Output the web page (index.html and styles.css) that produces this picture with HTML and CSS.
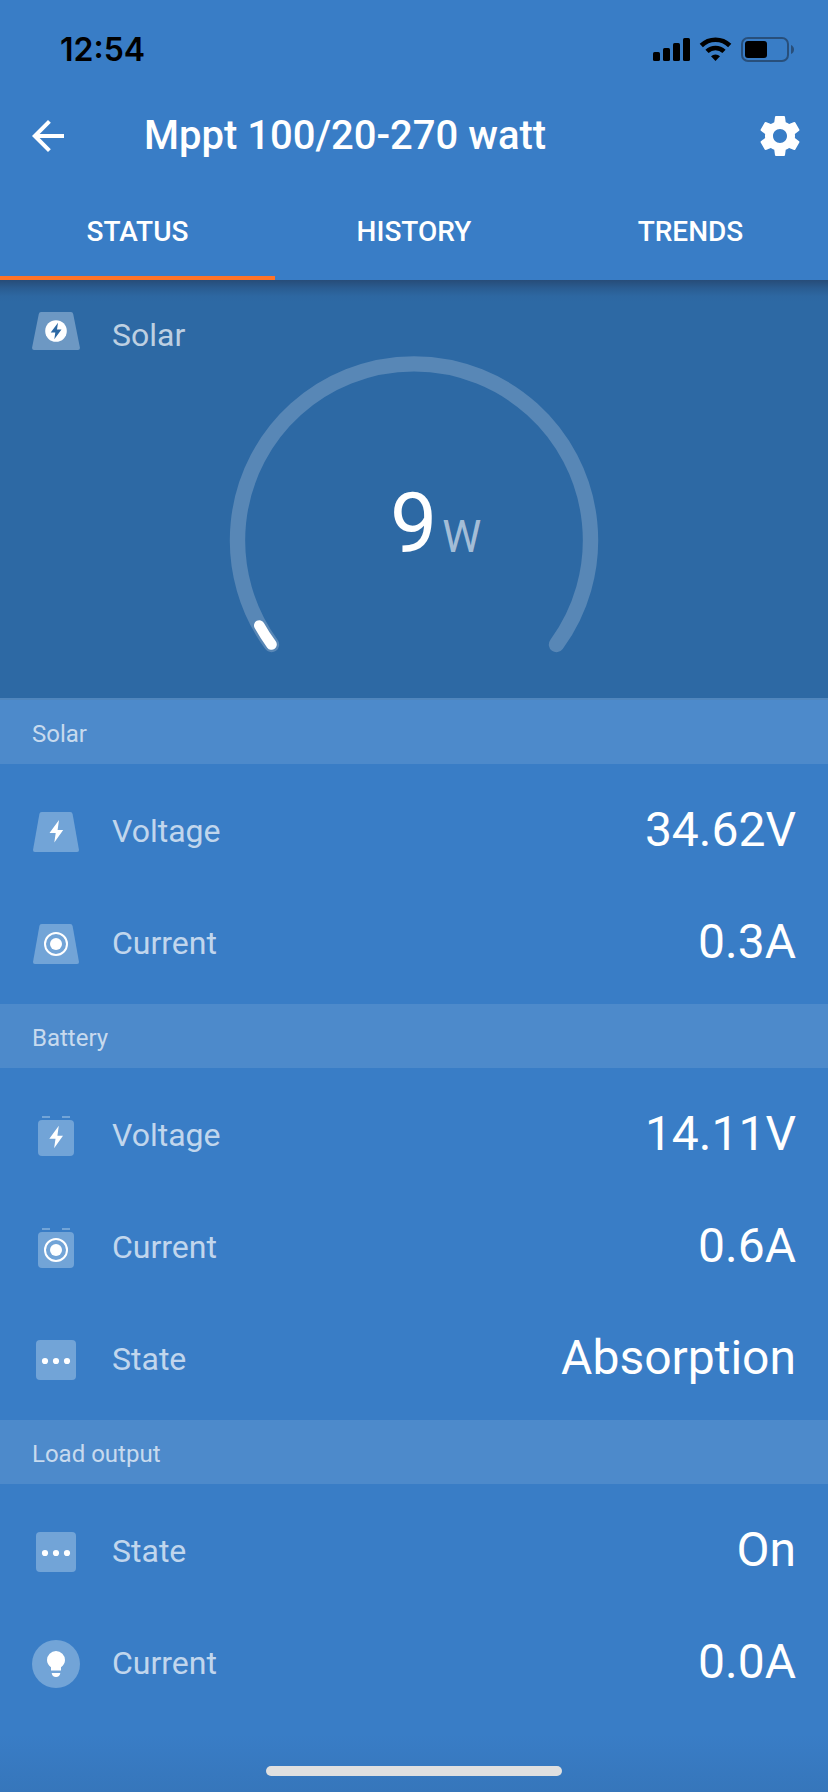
FILE: index.html
```html
<!DOCTYPE html>
<html lang="en">
<head>
<meta charset="utf-8">
<title>Mppt 100/20-270 watt</title>
<link rel="stylesheet" href="styles.css">
</head>
<body>
<svg class="defs" width="0" height="0" aria-hidden="true">
  <symbol id="panel" viewBox="0 0 48 48"><path d="M9.6 4H38.4Q40.2 4 40.6 6L46.9 41.5Q47.2 44 45 44H3Q.8 44 1.1 41.5L7.400 6Q7.800 4 9.600 4Z" fill="#72a4d7"/></symbol>
  <symbol id="battery" viewBox="0 0 48 48"><path d="M10 4h8v2h-8zM30 4h8v2h-8z" fill="#72a4d7"/><rect x="6" y="8" width="36" height="36" rx="4" fill="#72a4d7"/></symbol>
  <symbol id="bolt" viewBox="0 0 48 48"><path d="M27 12 17.500 25H23.700L22.300 34.500 31.200 22H25.600Z" fill="#fff"/></symbol>
  <symbol id="target" viewBox="0 0 48 48"><circle cx="24" cy="24" r="11" fill="none" stroke="#fff" stroke-width="2"/><circle cx="24" cy="24" r="6" fill="#fff"/></symbol>
  <symbol id="state" viewBox="0 0 48 48"><rect x="4" y="4" width="40" height="40" rx="4" fill="#72a4d7"/><g fill="#fff"><circle cx="13" cy="25" r="3.100"/><circle cx="24" cy="25" r="3.100"/><circle cx="35" cy="25" r="3.100"/></g></symbol>
</svg>

<header class="header">
  <div class="statusbar">
    <span class="time">12:54</span>
    <svg class="signals" width="144" height="28" viewBox="0 0 144 28">
      <rect x="2" y="16" width="7" height="9" rx="1.600"/><rect x="12" y="12" width="7" height="13" rx="1.600"/><rect x="22" y="7" width="7" height="18" rx="1.600"/><rect x="32" y="2" width="7" height="23" rx="1.600"/>
      <g fill="none" stroke="#000" stroke-width="4.600"><path d="M50.300 9.500A20.300 20.300 0 0 1 78.700 9.500"/><path d="M56 15.400A12.300 12.300 0 0 1 73 15.400"/></g>
      <path d="M60 20.300A6.800 6.800 0 0 1 69 20.300L64.500 25Z"/>
      <rect x="91" y="2" width="46" height="23" rx="6" fill="none" stroke="#284f7b" stroke-width="2"/>
      <rect x="94" y="5" width="22" height="17" rx="3"/>
      <path d="M140 9Q143 10.500 143 13.500T140 18Z" fill="#284f7b"/>
    </svg>
  </div>
  <div class="appbar">
    <svg class="back" viewBox="0 0 24 24"><path d="M20 11H7.830l5.590-5.590L12 4l-8 8 8 8 1.410-1.410L7.830 13H20v-2z"/></svg>
    <h1 class="title">Mppt 100/20-270 watt</h1>
    <svg class="gear" viewBox="0 0 24 24"><path d="M19.430 12.980c.04-.32.07-.64.07-.98s-.03-.66-.07-.98l2.110-1.650c.19-.15.24-.42.12-.64l-2-3.460c-.12-.22-.39-.3-.61-.22l-2.490 1c-.52-.4-1.080-.73-1.690-.98l-.38-2.650C14.460 2.180 14.250 2 14 2h-4c-.25 0-.46.18-.49.42l-.38 2.650c-.61.25-1.170.59-1.690.98l-2.490-1c-.23-.09-.49 0-.61.22l-2 3.460c-.13.22-.07.49.12.64l2.110 1.650c-.04.32-.07.65-.07.98s.03.66.07.98l-2.110 1.650c-.19.15-.24.42-.12.64l2 3.460c.12.22.39.3.61.22l2.490-1c.52.4 1.080.73 1.690.98l.38 2.650c.03.24.24.42.49.42h4c.25 0 .46-.18.49-.42l.38-2.650c.61-.25 1.170-.59 1.690-.98l2.490 1c.23.09.49 0 .61-.22l2-3.460c.12-.22.07-.49-.12-.64l-2.110-1.650zM12 15.500c-1.930 0-3.500-1.570-3.500-3.500s1.570-3.500 3.500-3.500 3.500 1.570 3.500 3.500-1.570 3.500-3.500 3.500z"/></svg>
  </div>
  <nav class="tabs">
    <span class="tab active">STATUS</span>
    <span class="tab">HISTORY</span>
    <span class="tab">TRENDS</span>
  </nav>
</header>

<main>
  <section class="overview">
    <div class="overview-head">
      <svg class="icon" viewBox="0 0 48 48"><path d="M9 4H39Q40.800 4 41.200 6L47.900 39.500Q48.200 42 46 42H2Q-.2 42 .1 39.500L6.800 6Q7.200 4 9 4Z" fill="#6d98c3"/><circle cx="24" cy="23" r="10.800" fill="#fff"/><path d="M26 14.700 18.700 24.500H23.300L22.300 31.200 29.500 21.500H25Z" fill="#2d69a4"/></svg>
      <span class="label">Solar</span>
    </div>
    <div class="gauge">
      <svg class="dial" viewBox="0 0 370 300">
        <path d="M42.500 288.500A176.500 176.500 0 1 1 327.500 288.500" fill="none" stroke="#5887b6" stroke-width="15.400" stroke-linecap="round"/>
        <path d="M42.500 288.500A176.500 176.500 0 0 1 30.300 269.500" fill="none" stroke="#fff" stroke-width="10.600" stroke-linecap="round"/>
      </svg>
      <div class="reading"><span class="power">9</span><span class="unit">W</span></div>
    </div>
  </section>

  <h2 class="section">Solar</h2>
  <div class="list">
    <div class="row"><svg class="icon" viewBox="0 0 48 48"><use href="#panel"/><use href="#bolt"/></svg><span class="label">Voltage</span><span class="value">34.62V</span></div>
    <div class="row"><svg class="icon" viewBox="0 0 48 48"><use href="#panel"/><use href="#target"/></svg><span class="label">Current</span><span class="value">0.3A</span></div>
  </div>

  <h2 class="section">Battery</h2>
  <div class="list">
    <div class="row"><svg class="icon" viewBox="0 0 48 48"><use href="#battery"/><use href="#bolt" x="-.2" y="1.700" width="48" height="48"/></svg><span class="label">Voltage</span><span class="value">14.11V</span></div>
    <div class="row"><svg class="icon" viewBox="0 0 48 48"><use href="#battery"/><use href="#target" y="2" width="48" height="48"/></svg><span class="label">Current</span><span class="value">0.6A</span></div>
    <div class="row"><svg class="icon" viewBox="0 0 48 48"><use href="#state"/></svg><span class="label">State</span><span class="value">Absorption</span></div>
  </div>

  <h2 class="section">Load output</h2>
  <div class="list">
    <div class="row"><svg class="icon" viewBox="0 0 48 48"><use href="#state"/></svg><span class="label">State</span><span class="value">On</span></div>
    <div class="row"><svg class="icon" viewBox="0 0 48 48"><circle cx="24" cy="24" r="24" fill="#72a4d7"/><path d="M24 11a9 9 0 0 0-9 9c0 3 1.500 5.500 4 7.200V30.500h10V27.200c2.500-1.700 4-4.200 4-7.200a9 9 0 0 0-9-9zM19.700 33h8.600c0 2.300-2 4.100-4.300 4.100s-4.300-1.800-4.300-4.100z" fill="#fff"/></svg><span class="label">Current</span><span class="value">0.0A</span></div>
  </div>
</main>
<footer class="home"><span class="home-bar"></span></footer>
</body>
</html>
```
FILE: styles.css
```css
* { box-sizing: border-box; }
body {
  margin: 0;
  width: 828px;
  height: 1792px;
  overflow: hidden;
  display: flex;
  flex-direction: column;
  background: #397dc6;
  color: #fff;
  font-family: Roboto, sans-serif;
}
svg { display: block; flex: none; }
.defs { position: absolute; }

.header { height: 280px; }
.statusbar {
  height: 88px;
  padding: 12px 33px 0 60px;
  display: flex;
  align-items: center;
  justify-content: space-between;
}
.time {
  color: #000;
  font: 600 32px/1 Inter, sans-serif;
}
.appbar {
  height: 96px;
  padding: 0 24px;
  display: flex;
  align-items: center;
}
.back, .gear { width: 48px; height: 48px; fill: #fff; }
.title {
  flex: 1;
  margin: 0 0 0 72px;
  font-size: 40px;
  font-weight: 500;
  line-height: 48px;
}
.tabs { height: 96px; display: grid; grid-template-columns: 275px 1fr 275px; }
.tab {
  display: flex;
  align-items: center;
  justify-content: center;
  padding-top: 2px;
  border-bottom: 4px solid transparent;
  font-size: 28px;
  font-weight: 500;
}
.tab.active { border-color: #ff7327; }

.overview {
  height: 420px;
  padding-top: 28px;
  border-bottom: 2px solid #5086bd;
  background: linear-gradient(#274c78, #2a5c91 8px, #2d67a1 16px, #2d69a4 22px);
}
.overview-head {
  height: 48px;
  padding-left: 32px;
  display: flex;
  align-items: center;
}
.overview-head .label { padding: 8px 0 2px; }
.icon { width: 48px; height: 48px; }
.label {
  margin-left: 32px;
  padding-bottom: 2px;
  font-size: 32px;
  line-height: 40px;
  color: rgba(255, 255, 255, .7);
}
.gauge { display: grid; justify-content: center; }
.dial { grid-area: 1 / 1; width: 370px; height: 300px; }
.reading {
  grid-area: 1 / 1;
  display: flex;
  align-items: baseline;
  padding: 118px 0 0 161px;
  line-height: 100px;
}
.power { font-size: 84px; }
.unit { margin-left: 5px; font-size: 44px; color: rgba(255, 255, 255, .58); }

.section {
  margin: 0;
  height: 64px;
  padding: 5px 32px 0;
  background: #4d8acb;
  color: rgba(255, 255, 255, .7);
  font-size: 24px;
  font-weight: 400;
  line-height: 58px;
}
.list { padding: 12px 0 4px; }
.row {
  height: 112px;
  padding: 0 32px;
  display: flex;
  align-items: center;
}
.value { margin-left: auto; padding-bottom: 4px; font-size: 48px; line-height: 56px; }

.home {
  flex: 1;
  display: flex;
  justify-content: center;
  align-items: flex-end;
  padding-bottom: 16px;
  background: linear-gradient(#397dc6 15%, #3676bb);
}
.home-bar { width: 296px; height: 10px; border-radius: 5px; background: #e0e0e0; }
```
